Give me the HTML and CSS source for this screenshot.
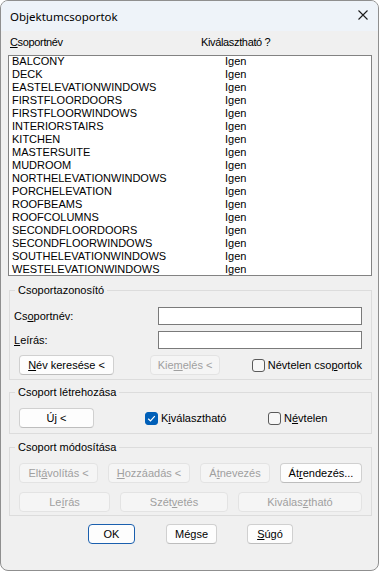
FILE: index.html
```html
<!DOCTYPE html>
<html lang="hu">
<head>
<meta charset="utf-8">
<title>Objektumcsoportok</title>
<link rel="stylesheet" href="styles.css">
</head>
<body>
<div class="window">
  <div class="titlebar">
    <span class="title">Objektumcsoportok</span>
    <svg class="close" width="10" height="10" viewBox="0 0 10 10"><path d="M0.5 0.5 L9.5 9.5 M9.5 0.5 L0.5 9.5" stroke="#1b1b1b" stroke-width="1.1" fill="none"/></svg>
  </div>
  <div class="content">
    <div class="list-header">
      <span class="hcol1"><u>C</u>soportnév</span>
      <span class="hcol2">Kiválasztható ?</span>
    </div>
    <div class="list">
      <div class="row"><span>BALCONY</span><span>Igen</span></div>
      <div class="row"><span>DECK</span><span>Igen</span></div>
      <div class="row"><span>EASTELEVATIONWINDOWS</span><span>Igen</span></div>
      <div class="row"><span>FIRSTFLOORDOORS</span><span>Igen</span></div>
      <div class="row"><span>FIRSTFLOORWINDOWS</span><span>Igen</span></div>
      <div class="row"><span>INTERIORSTAIRS</span><span>Igen</span></div>
      <div class="row"><span>KITCHEN</span><span>Igen</span></div>
      <div class="row"><span>MASTERSUITE</span><span>Igen</span></div>
      <div class="row"><span>MUDROOM</span><span>Igen</span></div>
      <div class="row"><span>NORTHELEVATIONWINDOWS</span><span>Igen</span></div>
      <div class="row"><span>PORCHELEVATION</span><span>Igen</span></div>
      <div class="row"><span>ROOFBEAMS</span><span>Igen</span></div>
      <div class="row"><span>ROOFCOLUMNS</span><span>Igen</span></div>
      <div class="row"><span>SECONDFLOORDOORS</span><span>Igen</span></div>
      <div class="row"><span>SECONDFLOORWINDOWS</span><span>Igen</span></div>
      <div class="row"><span>SOUTHELEVATIONWINDOWS</span><span>Igen</span></div>
      <div class="row"><span>WESTELEVATIONWINDOWS</span><span>Igen</span></div>
    </div>

    <fieldset class="group g1">
      <legend>Csoportazonosító</legend>
      <div class="id-grid">
        <label class="flabel">Cs<u>o</u>portnév:</label>
        <div class="input"></div>
        <label class="flabel"><u>L</u>eírás:</label>
        <div class="input"></div>
        <div class="brow">
          <span class="btn w95 ml5"><span><u>N</u>év keresése &lt;</span></span>
          <span class="btn disabled w70 ml36"><span>Kie<u>m</u>elés &lt;</span></span>
          <span class="check right"><span class="box"></span><span>Névtelen cso<u>p</u>ortok</span></span>
        </div>
      </div>
    </fieldset>

    <fieldset class="group g2">
      <legend>Csoport létrehozása</legend>
      <div class="brow">
        <span class="btn w75 ml5"><span>Ú<u>j</u> &lt;</span></span>
        <span class="check c-sel"><span class="box checked"><svg width="11" height="11" viewBox="0 0 11 11"><path d="M2.2 5.8 L4.5 8 L8.8 3.2" stroke="#fff" stroke-width="1.2" fill="none"/></svg></span><span>K<u>i</u>választható</span></span>
        <span class="check"><span class="box"></span><span>N<u>é</u>vtelen</span></span>
      </div>
    </fieldset>

    <fieldset class="group g3">
      <legend>Csoport módosítása</legend>
      <div class="brow">
        <span class="btn disabled w79 ml5"><span>Elt<u>á</u>volítás &lt;</span></span>
        <span class="btn disabled w82 ml10"><span><u>H</u>ozzáadás &lt;</span></span>
        <span class="btn disabled w70 ml10"><span>Á<u>t</u>nevezés</span></span>
        <span class="btn w82 ml10"><span>Át<u>r</u>endezés...</span></span>
      </div>
      <div class="brow r2">
        <span class="btn disabled w91 ml5"><span>Le<u>í</u>rás</span></span>
        <span class="btn disabled w108 ml10"><span>Szét<u>v</u>etés</span></span>
        <span class="btn disabled w124 ml10"><span>Kiválas<u>z</u>tható</span></span>
      </div>
    </fieldset>

    <div class="footer">
      <span class="btn default w47"><span>OK</span></span>
      <span class="btn w51 ml31"><span>Mégse</span></span>
      <span class="btn w46 ml30"><span><u>S</u>úgó</span></span>
    </div>
  </div>
</div>
</body>
</html>
```
FILE: styles.css
```css
* { box-sizing: border-box; }

body {
  margin: 0;
  background: #ffffff;
  font-family: "Liberation Sans", Arial, sans-serif;
  font-size: 11px;
  color: #000;
}

u { text-decoration: underline; text-underline-offset: 1px; }

.window {
  width: 379px;
  height: 571px;
  border: 1px solid #8f8f8f;
  border-radius: 8px;
  overflow: hidden;
  background: #f0f0f0;
  display: flex;
  flex-direction: column;
}

.titlebar {
  height: 30px;
  flex: none;
  background: #eef3f9;
  display: flex;
  align-items: center;
  justify-content: space-between;
  padding: 0 10px 0 9px;
}

.title {
  font-family: "Noto Sans", sans-serif;
  font-size: 11.5px;
  color: #000;
}

.close { margin-bottom: 2px; }

.content {
  padding: 0 6px 0 7px;
}

.list-header {
  display: flex;
  padding: 5px 0 6px 2px;
  line-height: 13px;
  letter-spacing: -0.35px;
}
.hcol1 { width: 191px; }

.list {
  height: 221px;
  border: 1px solid #828282;
  background: #fff;
  overflow: hidden;
  padding-left: 3px;
}

.row {
  display: grid;
  grid-template-columns: 213px 1fr;
  height: 13px;
  line-height: 11px;
}

.group {
  margin: 0 0 0 1px;
  border: 1px solid #dcdcdc;
  min-inline-size: 0;
}

.group legend {
  padding: 0 3px;
  margin-left: 1px;
  line-height: 13px;
}

.g1 { margin-top: 8px; padding: 10px 8px 4px 4px; }
.g2 { margin-top: 6px; padding: 9px 8px 5px 4px; }
.g3 { margin-top: 7px; padding: 9px 8px 3px 4px; }

.id-grid {
  display: grid;
  grid-template-columns: 144px 204px;
  grid-template-rows: 18px 18px 20px;
  row-gap: 6px;
  align-items: center;
}

.flabel { line-height: 13px; }

.input {
  height: 18px;
  background: #fff;
  border: 1px solid #7a7a7a;
}

.brow {
  grid-column: 1 / -1;
  display: flex;
  align-items: center;
  height: 20px;
}
.r2 { margin-top: 9px; }

.btn {
  height: 20px;
  display: flex;
  align-items: center;
  justify-content: center;
  background: #fdfdfd;
  border: 1px solid #d0d0d0;
  border-bottom-color: #bdbdbd;
  border-radius: 4px;
  white-space: nowrap;
  line-height: 13px;
}
.btn.disabled {
  background: #f5f5f5;
  border-color: #e3e3e3;
  color: #a0a0a0;
}
.btn.default {
  border: 1px solid #1a5fae;
}

.w46 { width: 46px; }
.w47 { width: 47px; }
.w51 { width: 51px; }
.w70 { width: 70px; }
.w75 { width: 75px; }
.w79 { width: 79px; }
.w82 { width: 82px; }
.w91 { width: 91px; }
.w95 { width: 95px; }
.w108 { width: 108px; }
.w124 { width: 124px; }
.ml5 { margin-left: 5px; }
.ml10 { margin-left: 10px; }
.ml30 { margin-left: 30px; }
.ml31 { margin-left: 31px; }
.ml36 { margin-left: 36px; }

.check {
  display: inline-flex;
  align-items: center;
  gap: 3px;
  line-height: 13px;
  white-space: nowrap;
}
.check.right { margin-left: auto; }
.check.c-sel { margin-left: 51px; width: 123px; }

.box {
  width: 13px;
  height: 13px;
  border: 1px solid #5a5a5a;
  border-radius: 3px;
  background: #f7f7f7;
  display: flex;
  align-items: center;
  justify-content: center;
}
.box.checked {
  background: #005fb8;
  border-color: #005fb8;
}

.footer {
  display: flex;
  margin-top: 8px;
  padding-left: 80px;
}
```
